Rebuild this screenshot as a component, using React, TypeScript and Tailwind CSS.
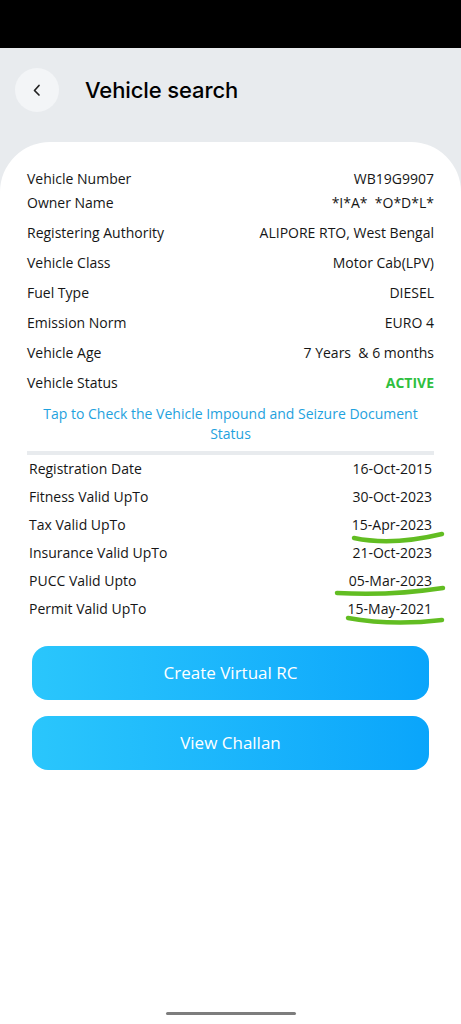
import React from "react";

const top: [string, React.ReactNode, string][] = [
  ["Vehicle Number", "WB19G9907", "h-[24px]"],
  ["Owner Name", "*I*A*  *O*D*L*", "h-[24px]"],
  ["Registering Authority", "ALIPORE RTO, West Bengal", "h-[30px] mt-[3px]"],
  ["Vehicle Class", "Motor Cab(LPV)", "h-[30px]"],
  ["Fuel Type", "DIESEL", "h-[30px]"],
  ["Emission Norm", "EURO 4", "h-[30px]"],
  ["Vehicle Age", "7 Years  & 6 months", "h-[30px]"],
];

const dates: [string, string][] = [
  ["Registration Date", "16-Oct-2015"],
  ["Fitness Valid UpTo", "30-Oct-2023"],
  ["Tax Valid UpTo", "15-Apr-2023"],
  ["Insurance Valid UpTo", "21-Oct-2023"],
  ["PUCC Valid Upto", "05-Mar-2023"],
  ["Permit Valid UpTo", "15-May-2021"],
];

export default function App() {
  return (
    <div
      className="w-[461px] h-[1024px] flex flex-col bg-[#e8ebee] overflow-hidden text-[#161616]"
      style={{ fontFamily: '"Open Sans", "Noto Sans", sans-serif' }}
    >
      <div className="h-[48px] bg-black shrink-0" />
      <div className="h-[94px] shrink-0 flex items-start pt-[20px] pl-[15px]">
        <div className="w-[44px] h-[44px] rounded-full bg-[#f3f5f7] flex items-center justify-center">
          <svg width="16" height="16" viewBox="0 0 16 16" fill="none">
            <path d="M10 3.5 L5.5 8.5 L10 13" stroke="#222" strokeWidth="1.7" strokeLinecap="round" strokeLinejoin="round" />
          </svg>
        </div>
        <div
          className="ml-[26px] h-[44px] flex items-center text-[22px] font-medium text-black tracking-[-0.1px]"
          style={{ fontFamily: 'Inter, "Noto Sans", sans-serif' }}
        >
          Vehicle search
        </div>
      </div>
      <div className="flex-1 bg-white rounded-t-[50px] flex flex-col pt-[24px]">
        <div className="px-[27px] text-[14px] font-[500]">
          {top.map(([k, v, h]) => (
            <div key={k} className={`flex items-center justify-between ${h}`}>
              <span>{k}</span>
              <span className="whitespace-pre">{v}</span>
            </div>
          ))}
          <div className="flex items-center justify-between h-[30px]">
            <span>Vehicle Status</span>
            <span className="font-bold text-[#2fbf3f]">ACTIVE</span>
          </div>
          <div className="mt-[7px] text-center text-[#1fa2de] leading-[20px] px-[8px]">
            Tap to Check the Vehicle Impound and Seizure Document Status
          </div>
          <div className="mt-[7px] h-[4px] bg-[#e8ebee]" />
        </div>
        <div className="relative px-[29px] text-[14px] font-[500] mt-[-1px]">
          {dates.map(([k, v]) => (
            <div key={k} className="flex items-center justify-between h-[28px]">
              <span>{k}</span>
              <span>{v}</span>
            </div>
          ))}
          <svg className="absolute left-0 top-0 pointer-events-none" width="461" height="180" viewBox="0 0 461 180" fill="none">
            <path d="M354 84 Q 392 92 442 80" stroke="#62bd22" strokeWidth="4.5" strokeLinecap="round" />
            <path d="M337 139 Q 390 142 443 134" stroke="#62bd22" strokeWidth="4.5" strokeLinecap="round" />
            <path d="M348 164 Q 392 172 442 166" stroke="#62bd22" strokeWidth="4.5" strokeLinecap="round" />
          </svg>
        </div>
        <div className="mt-[24px] mx-[32px] flex flex-col gap-[16px]">
          <div className="h-[54px] rounded-[16px] bg-gradient-to-r from-[#2ac6fc] to-[#0aa5fb] flex items-center justify-center text-white text-[17px] font-medium">
            Create Virtual RC
          </div>
          <div className="h-[54px] rounded-[16px] bg-gradient-to-r from-[#2ac6fc] to-[#0aa5fb] flex items-center justify-center text-white text-[17px] font-medium">
            View Challan
          </div>
        </div>
        <div className="flex-1" />
        <div className="flex justify-center pb-[9px]">
          <div className="w-[130px] h-[3px] bg-[#7d7d7d] rounded-full" />
        </div>
      </div>
    </div>
  );
}
